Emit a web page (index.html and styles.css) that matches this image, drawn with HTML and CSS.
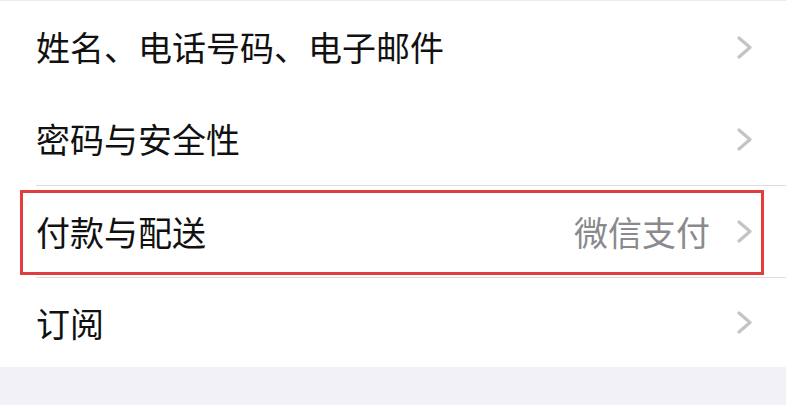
FILE: index.html
```html
<!DOCTYPE html>
<html lang="zh-CN">
<head>
<meta charset="utf-8">
<link rel="stylesheet" href="styles.css">
</head>
<body>
<div class="page">
  <div class="list">
    <div class="row">
      <span class="label">姓名、电话号码、电子邮件</span>
      <span class="right"><svg class="chev" viewBox="0 0 15 23" width="15" height="23"><polyline points="2,2 13,11.5 2,21" /></svg></span>
    </div>
    <div class="row">
      <span class="label">密码与安全性</span>
      <span class="right"><svg class="chev" viewBox="0 0 15 23" width="15" height="23"><polyline points="2,2 13,11.5 2,21" /></svg></span>
    </div>
    <div class="row sep">
      <span class="label">付款与配送</span>
      <span class="right"><span class="detail">微信支付</span><svg class="chev" viewBox="0 0 15 23" width="15" height="23"><polyline points="2,2 13,11.5 2,21" /></svg></span>
    </div>
    <div class="row sep last">
      <span class="label">订阅</span>
      <span class="right"><svg class="chev" viewBox="0 0 15 23" width="15" height="23"><polyline points="2,2 13,11.5 2,21" /></svg></span>
    </div>
    <div class="highlight"></div>
  </div>
</div>
</body>
</html>
```

FILE: styles.css
```css
html, body {
  margin: 0;
  padding: 0;
}
body {
  background: #f2f2f6;
  width: 786px;
  height: 405px;
  overflow: hidden;
  font-family: "Noto Sans CJK SC", "Noto Sans", sans-serif;
}
.page {
  width: 786px;
}
.list {
  position: relative;
  background: #ffffff;
  border-top: 1px solid #ebebed;
}
.row {
  height: 92px;
  margin-left: 36px;
  padding-right: 34px;
  display: flex;
  align-items: center;
  justify-content: space-between;
  box-sizing: border-box;
}
.row.sep {
  border-top: 1px solid #dedee2;
}
.row.last {
  height: 90px;
}
.label {
  font-size: 34px;
  color: #111111;
  line-height: 1;
}
.right {
  display: flex;
  align-items: center;
}
.detail {
  font-size: 34px;
  color: #8a8a8e;
  line-height: 1;
  margin-right: 27px;
}
.chev {
  display: block;
}
.chev polyline {
  fill: none;
  stroke: #c4c4c8;
  stroke-width: 3.2;
  stroke-linecap: round;
  stroke-linejoin: round;
}
.highlight {
  position: absolute;
  left: 20px;
  top: 189px;
  width: 738px;
  height: 79px;
  border: 3px solid #e13d3f;
  pointer-events: none;
}
```
